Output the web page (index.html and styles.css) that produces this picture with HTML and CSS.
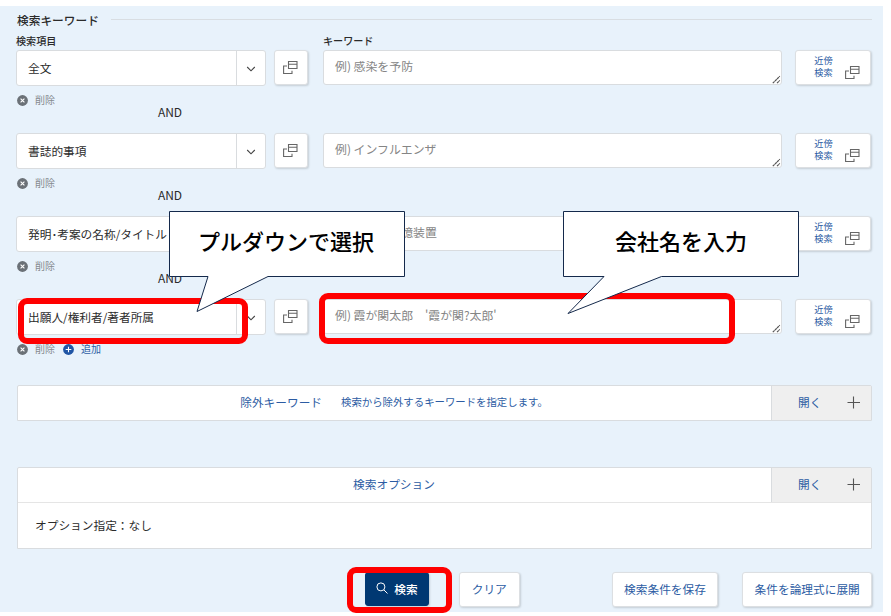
FILE: index.html
```html
<!DOCTYPE html>
<html lang="ja">
<head>
    <meta charset="UTF-8">
    <meta name="viewport" content="width=device-width, initial-scale=1.0">
    <title>検索キーワード</title>
    <link rel="stylesheet" href="styles.css">
</head>
<body>
    <!-- shared icons -->
    <svg class="sprite" width="0" height="0">
        <symbol id="icon-window" viewBox="0 0 16 14">
            <path d="M5.500 .5h8.500v7H5.500zM5.500 3.200h8.500M4 5H.6v7.500h8.400v-2.700" fill="none" stroke="#666" stroke-width="1.1"/>
        </symbol>
        <symbol id="icon-down" viewBox="0 0 10 6">
            <path d="M1.2 1l3.8 3.8L8.8 1" fill="none" stroke="#444" stroke-width="1.1"/>
        </symbol>
        <symbol id="icon-delete" viewBox="0 0 11 11">
            <circle cx="5.5" cy="5.5" r="5.4" fill="#6b7177"/>
            <path d="M3.6 3.6l3.8 3.8M7.4 3.6L3.6 7.4" stroke="#fff" stroke-width="1.1"/>
        </symbol>
        <symbol id="icon-add" viewBox="0 0 11 11">
            <circle cx="5.5" cy="5.5" r="5.4" fill="#1f55a5"/>
            <path d="M5.5 2.7v5.6M2.7 5.5h5.6" stroke="#fff" stroke-width="1.1"/>
        </symbol>
        <symbol id="icon-grip" viewBox="0 0 9 9">
            <path d="M.8 8.2l7-7M5 8.2l2.8-2.8" stroke="#555" stroke-width="1.2" stroke-dasharray="2.6 .4"/>
        </symbol>
        <symbol id="icon-plus" viewBox="0 0 14 14">
            <path d="M6.500 .5v12M.5 6.500h12.500" stroke="#555" stroke-width="1.1"/>
        </symbol>
    </svg>

    <main class="panel">
        <h2 class="title">検索キーワード</h2>
        <div class="labels">
            <span>検索項目</span>
            <span>キーワード</span>
        </div>

        <div class="row">
            <div class="fields">
                <div class="select"><span class="value">全文</span><span class="arrow"><svg><use href="#icon-down"/></svg></span></div>
                <button class="btn btn-window"><svg class="window"><use href="#icon-window"/></svg></button>
                <div class="keyword"><textarea placeholder="例) 感染を予防"></textarea><svg class="grip"><use href="#icon-grip"/></svg></div>
                <button class="btn btn-near"><span>近傍<br>検索</span><svg class="window"><use href="#icon-window"/></svg></button>
            </div>
            <div class="links"><a class="delete"><svg><use href="#icon-delete"/></svg>削除</a></div>
            <div class="and">AND</div>
        </div>

        <div class="row">
            <div class="fields">
                <div class="select"><span class="value">書誌的事項</span><span class="arrow"><svg><use href="#icon-down"/></svg></span></div>
                <button class="btn btn-window"><svg class="window"><use href="#icon-window"/></svg></button>
                <div class="keyword"><textarea placeholder="例) インフルエンザ"></textarea><svg class="grip"><use href="#icon-grip"/></svg></div>
                <button class="btn btn-near"><span>近傍<br>検索</span><svg class="window"><use href="#icon-window"/></svg></button>
            </div>
            <div class="links"><a class="delete"><svg><use href="#icon-delete"/></svg>削除</a></div>
            <div class="and">AND</div>
        </div>

        <div class="row">
            <div class="fields">
                <div class="select"><span class="value">発明･考案の名称/タイトル</span><span class="arrow"><svg><use href="#icon-down"/></svg></span></div>
                <button class="btn btn-window"><svg class="window"><use href="#icon-window"/></svg></button>
                <div class="keyword"><textarea placeholder="例) 半導体記憶装置"></textarea><svg class="grip"><use href="#icon-grip"/></svg></div>
                <button class="btn btn-near"><span>近傍<br>検索</span><svg class="window"><use href="#icon-window"/></svg></button>
            </div>
            <div class="links"><a class="delete"><svg><use href="#icon-delete"/></svg>削除</a></div>
            <div class="and">AND</div>
        </div>

        <div class="row">
            <div class="fields">
                <div class="select"><span class="value">出願人/権利者/著者所属</span><span class="arrow"><svg><use href="#icon-down"/></svg></span></div>
                <button class="btn btn-window"><svg class="window"><use href="#icon-window"/></svg></button>
                <div class="keyword"><textarea placeholder="例) 霞が関太郎　'霞が関?太郎'"></textarea><svg class="grip"><use href="#icon-grip"/></svg></div>
                <button class="btn btn-near"><span>近傍<br>検索</span><svg class="window"><use href="#icon-window"/></svg></button>
            </div>
            <div class="links">
                <a class="delete"><svg><use href="#icon-delete"/></svg>削除</a>
                <a class="add"><svg><use href="#icon-add"/></svg>追加</a>
            </div>
        </div>

        <section class="accordion exclude">
            <div class="bar">
                <div class="bar-title">除外キーワード<small>検索から除外するキーワードを指定します。</small></div>
                <div class="open"><span>開く</span><svg><use href="#icon-plus"/></svg></div>
            </div>
        </section>

        <section class="accordion options">
            <div class="bar">
                <div class="bar-title">検索オプション</div>
                <div class="open"><span>開く</span><svg><use href="#icon-plus"/></svg></div>
            </div>
            <div class="bar-body">オプション指定：なし</div>
        </section>

        <div class="actions">
            <button class="btn btn-search">
                <svg viewBox="0 0 12 12"><circle cx="4.9" cy="4.9" r="4" fill="none" stroke="#fff"/><path d="M7.8 7.8l3.7 3.7" stroke="#fff"/></svg>検索
            </button>
            <button class="btn btn-clear">クリア</button>
            <button class="btn btn-save">検索条件を保存</button>
            <button class="btn btn-expand">条件を論理式に展開</button>
        </div>
    </main>

    <!-- guide marks on top of the form -->
    <div class="mark mark-select"></div>
    <div class="mark mark-keyword"></div>
    <div class="mark mark-search"></div>
    <div class="callout callout-select">
        <svg viewBox="0 0 236 102"><path d="M.5.5h235v65H99L28 100.500l11-35H.5z"/></svg>
        <p>プルダウンで選択</p>
    </div>
    <div class="callout callout-keyword">
        <svg viewBox="0 0 236 104"><path d="M.5.5h235v65H98.500L5 102.500l36-37H.5z"/></svg>
        <p>会社名を入力</p>
    </div>
</body>
</html>
```

FILE: styles.css
```css
* { box-sizing: border-box; }
body { margin: 0; height: 616px; padding-top: 6px; background: #fff; color: #2b2b2b; font-family: "Noto Sans CJK JP", sans-serif; font-size: 11.7px; overflow: hidden; }
svg { display: block; flex: none; }
.sprite { position: absolute; }
.panel { width: 883px; height: 606px; padding: 4px 11px 0 16px; background: #e8f2fb; }

.title { display: flex; align-items: center; gap: 12px; height: 18px; margin: 0; padding-left: 1px; font-size: 11.7px; font-weight: 500; }
.title::after { content: ""; flex: 1; height: 1px; background: #d8dde2; }
.labels { display: grid; grid-template-columns: 307px 1fr; height: 22px; padding-top: 5px; font-size: 10.1px; line-height: 15px; font-weight: 500; }

/* search rows */
.row { height: 83px; }
.fields { display: flex; align-items: flex-start; height: 36px; }
.select { display: flex; width: 250px; height: 36px; background: #fff; border: 1px solid #d9dcdf; border-radius: 3px; }
.value { flex: 1; padding-left: 11px; line-height: 33px; white-space: nowrap; }
.arrow { display: flex; align-items: center; justify-content: center; width: 29px; border-left: 1px solid #d9dcdf; }
.arrow svg { width: 10px; height: 6px; margin-top: 1px; }
.btn { display: flex; align-items: center; justify-content: center; margin: 0; padding: 0 0 2px; background: #fff; border: 1px solid #dcdfe2; border-radius: 3px; box-shadow: 1px 1px 2px rgba(0,0,0,0.15); color: #2c5ca3; font-family: inherit; font-size: 11.7px; }
.window { width: 16px; height: 14px; }
.btn-window { width: 34px; height: 35px; margin-left: 8px; padding: 0; }
.keyword { position: relative; width: 459px; height: 35px; margin-left: 15px; }
.keyword textarea { display: block; width: 459px; height: 35px; padding: 6px 11px; border: 1px solid #d9dcdf; border-radius: 3px; font-family: inherit; font-size: 11.9px; line-height: 18px; resize: none; overflow: hidden; }
.keyword textarea::placeholder { color: #858585; }
.grip { position: absolute; right: 1px; bottom: 1px; width: 9px; height: 9px; }
.btn-near { width: 76px; height: 35px; margin-left: 13px; gap: 12px; padding: 0 0 0 9px; font-size: 9.2px; line-height: 12px; }
.btn-near span { padding-bottom: 3px; }
.btn-near .window { margin-top: 10px; }
.links { display: flex; gap: 8px; height: 19px; padding: 6px 0 0 1px; font-size: 10px; line-height: 16px; }
.links a { display: flex; align-items: center; gap: 7px; height: 16px; color: #858a8f; }
.links svg { width: 11px; height: 11px; }
.links .add { color: #2c5ca3; }
.and { width: 308px; text-align: center; font-size: 12px; line-height: 14px; }

/* accordions */
.accordion { width: 855px; margin-left: 1px; background: #fff; border: 1px solid #d9dcdf; border-radius: 2px 2px 0 0; }
.exclude { height: 36px; margin-top: 3px; }
.options { height: 82px; margin-top: 46px; }
.bar { display: flex; height: 34px; }
.bar-title { flex: 1; display: flex; align-items: center; justify-content: center; gap: 19px; padding: 0 1px 3px 0; color: #2c5ca3; }
.bar-title small { font-size: 10.4px; }
.open { display: flex; align-items: center; width: 100px; padding-left: 26px; gap: 26px; background: #efefef; border-left: 1px solid #d9dcdf; color: #2c5ca3; }
.open span { padding-bottom: 3px; }
.open svg { width: 14px; height: 14px; }
.bar-body { height: 46px; padding-left: 17px; border-top: 1px solid #e5e5e5; line-height: 43px; }

.actions { display: flex; height: 35px; margin-top: 23px; }
.actions .btn { height: 35px; }
.btn-search { width: 64px; margin-left: 349px; gap: 6px; }
.actions .btn-search { height: 34px; background: #003872; border-color: #003872; color: #fff; font-weight: 500; }
.btn-search svg { width: 12px; height: 12px; }
.actions .btn-clear { width: 61px; margin-left: 30px; }
.actions .btn-save { width: 107px; margin-left: 92px; }
.actions .btn-expand { width: 130px; margin-left: 24px; }

/* guide marks */
.mark { position: absolute; border: 6px solid #f00; border-radius: 9px; }
.mark-select { left: 18px; top: 298px; width: 230px; height: 46px; }
.mark-keyword { left: 319px; top: 293px; width: 416px; height: 51px; }
.mark-search { left: 347px; top: 567px; width: 105px; height: 46px; }
.callout { position: absolute; width: 236px; height: 66px; }
.callout svg { position: absolute; left: 0; top: 0; width: 236px; fill: #fff; stroke: #14294b; stroke-width: 1; }
.callout p { position: relative; margin: 0; color: #000; font-size: 22px; font-weight: 500; line-height: 58px; text-align: center; white-space: nowrap; }
.callout-select { left: 169px; top: 211px; }
.callout-select p { padding-right: 2px; }
.callout-keyword { left: 563px; top: 211px; }
```
